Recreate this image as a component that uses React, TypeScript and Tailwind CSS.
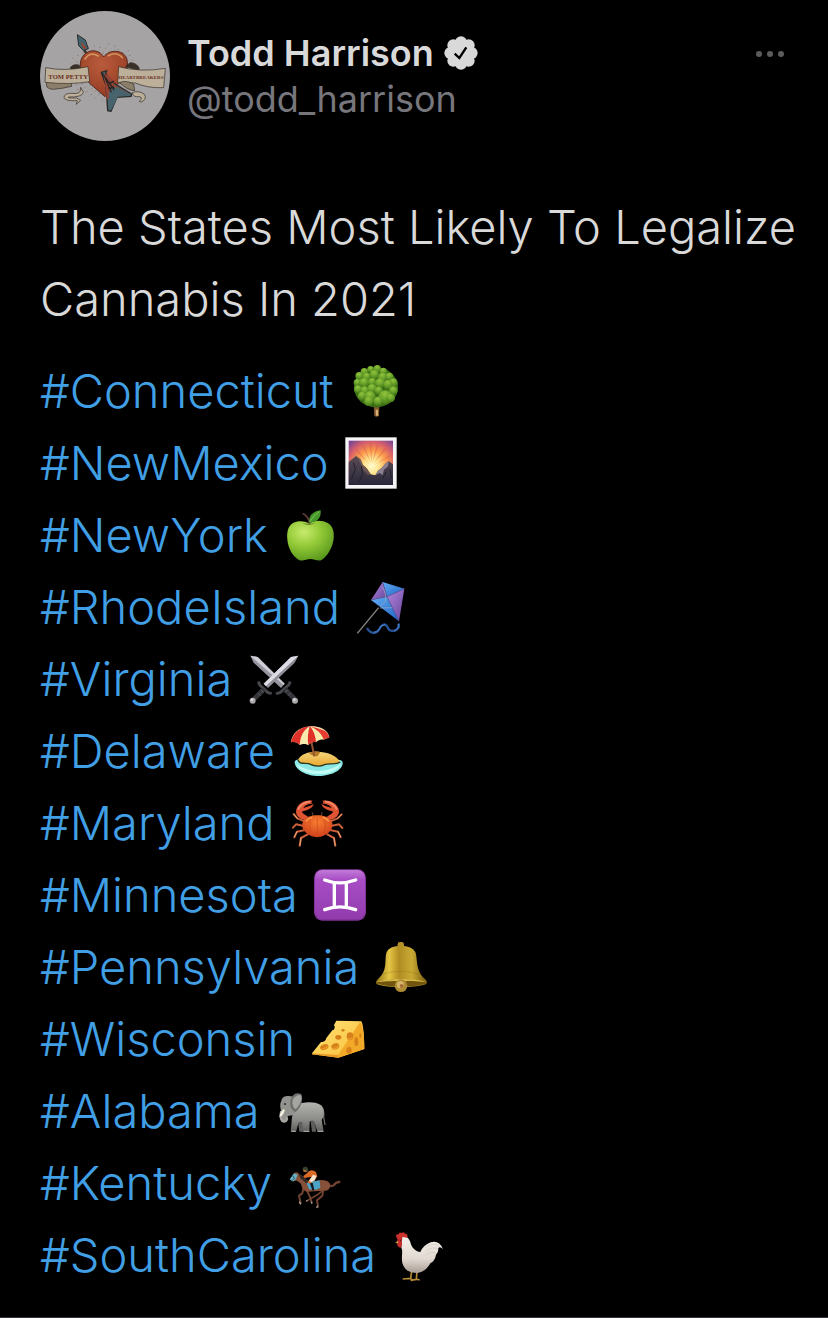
import React from 'react';

interface EmojiProps {
    label: string;
    viewBox: string;
    children: React.ReactNode;
}

const Emoji: React.FC<EmojiProps> = ({ label, viewBox, children }) => (
    <svg role="img" aria-label={label} viewBox={viewBox} className="size-[52px] shrink-0 overflow-visible">
        {children}
    </svg>
);

// [cx, cy, r] of each clump of leaves
const LEAVES = [
    [104, 40, 10], [124, 38, 11], [142, 46, 11], [85, 47, 11], [70, 60, 12], [92, 62, 12], [115, 56, 14],
    [140, 64, 14], [160, 62, 12], [172, 80, 13], [64, 80, 11], [84, 80, 14], [108, 78, 12], [132, 82, 15],
    [156, 86, 14], [66, 100, 12], [86, 104, 13], [108, 98, 14], [128, 104, 12], [172, 104, 13], [78, 120, 13],
    [102, 122, 17], [148, 124, 21], [126, 136, 14], [164, 126, 13], [98, 136, 14],
];

const Tree = () => (
    <Emoji label="Deciduous tree" viewBox="42 27 156 156">
        <defs>
            <radialGradient id="leaf" cx="45%" cy="25%" r="75%">
                <stop offset="0" stopColor="#93c43c" />
                <stop offset="0.55" stopColor="#669f2a" />
                <stop offset="1" stopColor="#427516" />
            </radialGradient>
        </defs>
        <path d="M113 145h17l-1 35q-8 4-14 0z" fill="#85592d" />
        <path d="M119 161h7v18h-6z" fill="#d5b176" />
        <ellipse cx="120" cy="94" rx="66" ry="60" fill="#376e14" />
        {LEAVES.map(([cx, cy, r]) => (
            <circle key={`${cx}-${cy}`} cx={cx} cy={cy} r={r} fill="url(#leaf)" />
        ))}
    </Emoji>
);

const Sunrise = () => (
    <Emoji label="Sunrise over mountains" viewBox="15 243 156 156">
        <defs>
            <radialGradient id="dawn" gradientUnits="userSpaceOnUse" cx="95" cy="330" r="95">
                <stop offset="0" stopColor="#fffbd0" />
                <stop offset="0.25" stopColor="#ffe28a" />
                <stop offset="0.5" stopColor="#fb9a4a" />
                <stop offset="0.75" stopColor="#d8606a" />
                <stop offset="1" stopColor="#7d4796" />
            </radialGradient>
            <linearGradient id="ridge" x1="0" y1="0" x2="0" y2="1">
                <stop offset="0" stopColor="#5b4a55" />
                <stop offset="1" stopColor="#29283a" />
            </linearGradient>
        </defs>
        <rect x="16" y="244" width="154" height="154" fill="#f6f6f8" />
        <rect x="26" y="254" width="133" height="133" fill="url(#dawn)" />
        <path d="M93 322L66 268l6-2zM95 320L88 262h7zM97 320l14-56 6 2zM101 322l34-48 5 4zM88 324l-42-42 4-4zM104 326l46-30 2 5z" fill="#d95c52" opacity="0.45" />
        <path d="M26 318l10-8 12-10 13 9 8 18 11 10 12 18 14 3 8-14 12-9 10-12 10-8 13 10v62H26z" fill="url(#ridge)" />
        <path d="M106 358l8-14 12-9 10-12 10-8-2 16-12 10-4 16-10-6z" fill="#8b7f92" />
        <path d="M48 300l13 9 8 18 11 10 12 18-8 2-14-14-8-20z" fill="#7b5e55" opacity="0.7" />
        <path d="M40 320l6 20-12 30M64 330l4 24-10 22M138 348l-10 20M150 340l4 26" stroke="#1f1f2b" strokeWidth="3" fill="none" />
    </Emoji>
);

const Apple = () => (
    <Emoji label="Green apple" viewBox="33 24 156 156">
        <defs>
            <radialGradient id="apple" cx="36%" cy="28%" r="80%">
                <stop offset="0" stopColor="#c8ea6e" />
                <stop offset="0.45" stopColor="#93ca37" />
                <stop offset="1" stopColor="#55941b" />
            </radialGradient>
        </defs>
        <path d="M108 67c16-9 38-11 56-1 16 9 20 27 18 47-3 27-20 54-36 64-12 5-22-3-34-3s-22 8-34 3C60 168 45 143 43 115c-2-22 2-40 17-49 15-8 34-7 48 1z" fill="url(#apple)" />
        <path d="M88 67q19 10 40-1-18 4-40 1z" fill="#5d8e1e" />
        <path d="M108 68c0-12-6-22-19-30 8 0 20 12 22 29z" fill="#684338" stroke="#684338" strokeWidth="3" />
        <path d="M108 65c-1-22 12-34 35-37 2 23-10 37-35 37z" fill="#45972b" />
        <path d="M111 62q9-18 28-30" stroke="#82c454" strokeWidth="3" fill="none" />
    </Emoji>
);

const Kite = () => (
    <Emoji label="Kite" viewBox="261 240 156 156">
        <defs>
            <linearGradient id="kiteBlue" x1="0" y1="0" x2="1" y2="1">
                <stop offset="0" stopColor="#63aef4" />
                <stop offset="1" stopColor="#1f62c4" />
            </linearGradient>
            <linearGradient id="kitePurple" x1="0" y1="0" x2="1" y2="1">
                <stop offset="0" stopColor="#b184dc" />
                <stop offset="1" stopColor="#67479e" />
            </linearGradient>
        </defs>
        <path d="M341 243l65 20-52 24z" fill="url(#kiteBlue)" />
        <path d="M341 243l13 44-48 10z" fill="url(#kitePurple)" />
        <path d="M406 263l-16 98-36-74z" fill="url(#kitePurple)" />
        <path d="M306 297l48-10 36 74z" fill="url(#kiteBlue)" />
        <path d="M341 243l13 44 36 74M306 297l48-10 52-24" stroke="#5c5b9f" strokeWidth="2" fill="none" />
        <path d="M340 257q14 24 9 45l-16 14M333 321l36-1" stroke="#9faac0" strokeWidth="2" fill="none" />
        <path d="M329 320l-64 77" stroke="#8c8983" strokeWidth="4" />
        <path d="M294 381c10 18 27 19 36 5 6-14 18-22 25-9 4 16 23 15 31 6 5-5 5-10 2-15" stroke="#285296" strokeWidth="7" fill="none" />
        <path d="M314 394q9 0 16-8 7-16 18-15M376 390q14-5 12-22" stroke="#4d8bd0" strokeWidth="3" fill="none" />
    </Emoji>
);

const Swords = () => (
    <Emoji label="Crossed swords" viewBox="36 21 156 156">
        <path d="M43 29l22 4 81 80-11 13-82-76z" fill="#97949f" />
        <path d="M43 29l100 88 3-4-81-80z" fill="#d0cfd8" />
        <path d="M187 29l-22 4-82 80 13 13 80-76z" fill="#908c98" />
        <path d="M187 29L90 120l-7-7 82-80z" fill="#dddce5" />
        <path d="M67 107l4 10 25 23 11 3M163 107l-5 10-26 23-12 3" stroke="#45474c" strokeWidth="9" fill="none" strokeLinejoin="round" />
        <path d="M84 129l-30 30M146 129l30 30" stroke="#34353a" strokeWidth="14" />
        <path d="M75 132l8 8M66 141l8 8M155 132l-8 8M164 141l-8 8" stroke="#6c6d72" strokeWidth="2" />
        <circle cx="50" cy="164" r="9" fill="#aaa6aa" />
        <circle cx="177" cy="164" r="9" fill="#aaa6aa" />
        <circle cx="48" cy="161" r="4" fill="#d8d6d8" />
        <circle cx="175" cy="161" r="4" fill="#d8d6d8" />
    </Emoji>
);

const Beach = () => (
    <Emoji label="Beach with umbrella" viewBox="165 240 156 156">
        <defs>
            <linearGradient id="sand" x1="0" y1="0" x2="0" y2="1">
                <stop offset="0" stopColor="#f5d77c" />
                <stop offset="1" stopColor="#e9a72f" />
            </linearGradient>
        </defs>
        <path d="M176 350c5-9 13-4 23-5h94c15-2 25-1 27 7 2 22-32 40-72 41-37 0-73-19-72-43z" fill="#8ae9e4" />
        <path d="M180 357q66 42 136-1-17 31-68 31-53 0-68-30z" fill="#c2fbf3" />
        <path d="M186 345c8-18 30-25 56-25 32 0 61 12 70 31-16 11-31 2-46 8-19 9-38 2-48-3-16-3-28 2-32-11z" fill="url(#sand)" />
        <path d="M186 345c4 13 16 9 32 11 10 5 29 12 48 3 15-6 31 3 47-8" fill="none" stroke="#28391f" strokeWidth="4" />
        <path d="M218 324q18-8 35-3l-8 12q-14 4-27-9z" fill="#b87b26" />
        <path d="M226 290l9 44" stroke="#955433" strokeWidth="6" />
        <path d="M165 292c2-25 23-45 56-48 29-2 54 9 59 32-4 5-9 3-17 8-6-2-15-1-23 8-8-2-17 0-23 9-7-5-17-6-26-1-6-8-16-11-26-8z" fill="#f8e9ad" />
        <path d="M221 244c-28 3-51 20-56 48 10-3 20 0 26 8 2-24 10-44 30-56z" fill="#df302a" />
        <path d="M221 244c-5 18-7 37-4 57 6-9 15-11 23-9-1-17-7-37-19-48z" fill="#df302a" />
        <path d="M221 244c20 8 36 21 42 40 8-5 13-3 17-8-3-8-7-14-14-19-12-8-28-13-45-13z" fill="#e63a30" />
        <path d="M221 244q28 0 45 13-20-8-45-13z" fill="#faebb9" />
    </Emoji>
);

const Crab = () => (
    <Emoji label="Crab" viewBox="27 21 156 156">
        <defs>
            <radialGradient id="shell" cx="50%" cy="30%" r="70%">
                <stop offset="0" stopColor="#f87d30" />
                <stop offset="1" stopColor="#cf3f1c" />
            </radialGradient>
        </defs>
        <g fill="none" strokeLinecap="round" strokeLinejoin="round">
            <path d="M68 94l-22-9-11-13M66 108l-24-5-9 10M69 120l-24 5-8 17M77 133l-20 11-4 23M145 94l22-9 12-12M147 108l24-5 10 11M144 120l24 5 8 17M136 133l20 11 4 23" stroke="#c9603a" strokeWidth="6" />
            <path d="M36 74l10 11M37 140l8-15M54 166l3-22M178 74l-11 11M176 140l-8-15M159 166l-3-22" stroke="#e7a573" strokeWidth="3" />
        </g>
        <path d="M72 91C53 88 36 76 44 55c6-16 25-26 48-23-5 3-5 6 0 9-12-1-25 5-28 14 8-5 20-6 31-13-5 17-26 19-36 23 5 8 15 11 21 17z" fill="#df5333" />
        <path d="M140 91c19-3 37-15 29-36-6-16-26-26-48-23 4 3 4 6 0 9 11-1 25 5 28 14-8-5-20-6-31-13 5 17 26 19 36 23-5 8-15 11-21 17z" fill="#df5333" />
        <path d="M48 59q10-21 37-25M165 59q-9-21-36-25" stroke="#f38b6c" strokeWidth="5" fill="none" />
        <path d="M91 67l3 19M120 66l-3 20" stroke="#56392d" strokeWidth="4" />
        <path d="M61 100c5-17 24-24 45-24s41 7 45 24c4 17-15 40-45 42-30-2-49-23-45-42z" fill="url(#shell)" />
        <path d="M86 87q-7 24 1 43M127 87q7 24-1 43M106 84v49" stroke="#c44118" strokeWidth="3" fill="none" opacity="0.5" />
        <path d="M71 94q9-10 20-12M122 82q12 3 19 12" stroke="#ffa04e" strokeWidth="4" fill="none" />
    </Emoji>
);

const Gemini = () => (
    <Emoji label="Gemini" viewBox="105 237 156 156">
        <defs>
            <linearGradient id="tile" x1="0" y1="0" x2="0" y2="1">
                <stop offset="0" stopColor="#c27bd8" />
                <stop offset="0.2" stopColor="#a84dc5" />
                <stop offset="1" stopColor="#913bad" />
            </linearGradient>
        </defs>
        <rect x="105" y="238" width="156" height="154" rx="25" fill="#82349b" />
        <rect x="108" y="240" width="150" height="147" rx="23" fill="url(#tile)" />
        <path d="M137 270q45 17 93 0M137 359q45-17 93 0M166 278v73M202 278v73" fill="none" stroke="#fff" strokeWidth="10" strokeLinecap="round" />
    </Emoji>
);

const Bell = () => (
    <Emoji label="Bell" viewBox="216 33 156 156">
        <defs>
            <linearGradient id="brass" x1="0" y1="0" x2="1" y2="0">
                <stop offset="0" stopColor="#8d7014" />
                <stop offset="0.26" stopColor="#e6c744" />
                <stop offset="0.45" stopColor="#b18c22" />
                <stop offset="0.7" stopColor="#c9aa34" />
                <stop offset="1" stopColor="#75590e" />
            </linearGradient>
        </defs>
        <rect x="284" y="36" width="19" height="20" rx="7" fill="#b39028" />
        <path d="M251 66q7-18 43-19 34 1 43 19c8 24-1 55 30 82 5 5 6 11 3 14-22 12-130 12-149 0-4-4-2-10 5-16 30-25 17-58 25-80z" fill="url(#brass)" />
        <path d="M219 157c30-13 123-12 152 0-9 17-142 17-152 0z" fill="#71540e" />
        <path d="M220 157c28-13 121-13 151 0-30-5-120-5-151 0z" fill="#d9bb4a" />
        <path d="M241 132q52-17 109 1" stroke="#8a6b18" strokeWidth="3" fill="none" opacity="0.3" />
        <circle cx="294" cy="167" r="19" fill="#ae8a33" />
        <circle cx="292" cy="164" r="11" fill="#d5b568" />
        <circle cx="296" cy="168" r="6" fill="#a56f35" />
    </Emoji>
);

const Cheese = () => (
    <Emoji label="Cheese wedge" viewBox="36 249 156 156">
        <defs>
            <linearGradient id="rind" x1="0" y1="0" x2="1" y2="1">
                <stop offset="0" stopColor="#ffe27a" />
                <stop offset="1" stopColor="#f9bf35" />
            </linearGradient>
        </defs>
        <path d="M39 370l27-34q13 1 16-12l18-23c7-1 9-9 5-16l7-13 75 2q8 13 9 83l-78 26-79-10z" fill="url(#rind)" />
        <path d="M118 374l65-98q12 8 13 81l-78 26z" fill="#f3a928" />
        <path d="M39 370l79 5v8l-79-10z" fill="#e89b24" />
        <g fill="#d6801b">
            <ellipse cx="76" cy="351" rx="13" ry="8" transform="rotate(-20 76 351)" />
            <ellipse cx="109" cy="349" rx="12" ry="9" transform="rotate(-20 109 349)" />
            <ellipse cx="118" cy="322" rx="9" ry="7" />
            <ellipse cx="132" cy="301" rx="5" ry="4" />
            <ellipse cx="153" cy="319" rx="10" ry="12" />
            <ellipse cx="172" cy="335" rx="6" ry="13" />
            <ellipse cx="150" cy="361" rx="8" ry="10" />
            <ellipse cx="184" cy="317" rx="3" ry="7" />
        </g>
        <path d="M68 355q9 3 18-6M101 355q10 2 17-7M146 326q7 4 15-3" stroke="#ee9b29" strokeWidth="4" fill="none" />
    </Emoji>
);

const Elephant = () => (
    <Emoji label="Elephant" viewBox="30 15 156 156">
        <defs>
            <linearGradient id="hide" x1="0" y1="0" x2="0" y2="1">
                <stop offset="0" stopColor="#b3b3b0" />
                <stop offset="0.6" stopColor="#8b8b88" />
                <stop offset="1" stopColor="#5c5c5a" />
            </linearGradient>
        </defs>
        <path d="M164 76q12 14 9 35l4 24" stroke="#696967" strokeWidth="4" fill="none" />
        <path d="M94 112l6 43h13l-1-42M132 112l6 43h12l-3-42z" fill="#5e5e5c" />
        <path d="M88 75c24-11 59-11 75-1 15 12 12 36 4 45l6 36h-19l-9-31q-6-5-14 1l-1 31h-20l-1-31-11 2-8 29H74l4-44z" fill="url(#hide)" />
        <path d="M46 62c3-15 19-16 37-12l15 29-14 26-19 3c0 16-9 24-18 17-8-8-6-21-1-31-4-12-5-22 0-32z" fill="#92928f" />
        <path d="M46 93c-4 12-3 28 7 31 8 2 12-7 8-12" stroke="#a5a5a2" strokeWidth="7" fill="none" />
        <path d="M76 55c4-13 18-19 29-13 8 8 3 42-17 54-14-5-20-25-12-41z" fill="#6f6f6d" />
        <path d="M82 55q16-15 23-8c4 12-4 30-17 41q-14-13-6-33z" fill="#a5a5a2" />
        <path d="M51 88q-9 11-11 22 9 3 17-20z" fill="#f3f0df" />
        <circle cx="57" cy="72" r="3" fill="#242424" />
        <path d="M77 154h12M113 154h17M155 154h17" stroke="#b5b4ae" strokeWidth="3" />
    </Emoji>
);

const Horse = () => (
    <Emoji label="Horse racing" viewBox="57 231 156 156">
        <g fill="none" stroke="#704330" strokeLinejoin="round" strokeLinecap="round">
            <path d="M104 322l-4 18-10 7 5 23M112 328l12 25 4 14M163 326l-3 21-16 14 3 19" strokeWidth="6" />
            <path d="M158 334l-15 12-30 17" strokeWidth="5" />
            <path d="M178 315q11 6 17 0 6-9 16-9" strokeWidth="7" />
        </g>
        <path d="M67 295l9-17 8-1 17 12 19 16 38-5q25 1 26 17-3 18-22 15l-48 3q-15-5-18-24l-12-9-15 1z" fill="#875039" />
        <path d="M87 279l18 12 17 16-9 4-19-17z" fill="#342722" />
        <path d="M62 298l13-18 11 4-5 13-9 8z" fill="#64afc3" />
        <path d="M71 287l5 8-6 7" stroke="#2e5364" strokeWidth="3" fill="none" />
        <path d="M113 309l39-8 2 22-13 6-21-1z" fill="#4ba4c5" />
        <path d="M122 309l9-1 5 22-5 3z" fill="#171a20" />
        <path d="M112 281q13-17 29-5l4 14-22 21-8-4 13-17-22 4-3-6z" fill="#dc6a27" />
        <path d="M132 284l10 3-4 14-10 6-8-4z" fill="#f4e5d0" />
        <circle cx="109" cy="270" r="7" fill="#a86f42" />
        <path d="M100 268q2-11 13-7 8 6 3 14l-6-5z" fill="#34422b" />
        <path d="M91 365l4 8M127 365l2 6M146 377l-3 7M112 363l3-1" stroke="#a89f98" strokeWidth="4" />
    </Emoji>
);

const Rooster = () => (
    <Emoji label="Rooster" viewBox="48 27 156 156">
        <defs>
            <linearGradient id="plume" x1="0" y1="0" x2="0" y2="1">
                <stop offset="0" stopColor="#f4f0ea" />
                <stop offset="0.6" stopColor="#e2dad2" />
                <stop offset="1" stopColor="#a99d95" />
            </linearGradient>
        </defs>
        <path d="M107 153l-3 22-24 2M123 153l-2 25-17 3M104 176l8 5M121 177l10 3" stroke="#b58c36" strokeWidth="5" fill="none" strokeLinejoin="round" />
        <path d="M78 52q17-7 25 14c3 16 15 29 30 30q8-20 31-29 25-8 37 20-9-8-14-3 1 14-7 20-3 18-17 26-13 25-39 29-37 0-45-30c-4-20 3-34-3-46z" fill="url(#plume)" />
        <path d="M149 82q24-17 40-3M150 94q20-16 35-8M147 107q17-14 31-8" stroke="#cfc6be" strokeWidth="2" fill="none" />
        <path d="M101 114q15 28 51 12" stroke="#cfc6be" strokeWidth="2" fill="none" />
        <path d="M62 55q-5-14 6-12 2-9 9-4 8-6 10 2 10 0 7 12l-14-2-9 8z" fill="#cd322e" />
        <path d="M65 54l14 1-2 15q3 9-4 13-12-2-9-16z" fill="#c92b2b" />
        <path d="M65 62l-7 7 9 1z" fill="#d9a440" />
        <circle cx="73" cy="61" r="2" fill="#222" />
    </Emoji>
);

const STATES = [
    { name: 'Connecticut', icon: Tree },
    { name: 'NewMexico', icon: Sunrise },
    { name: 'NewYork', icon: Apple },
    { name: 'RhodeIsland', icon: Kite },
    { name: 'Virginia', icon: Swords },
    { name: 'Delaware', icon: Beach },
    { name: 'Maryland', icon: Crab },
    { name: 'Minnesota', icon: Gemini },
    { name: 'Pennsylvania', icon: Bell },
    { name: 'Wisconsin', icon: Cheese },
    { name: 'Alabama', icon: Elephant },
    { name: 'Kentucky', icon: Horse },
    { name: 'SouthCarolina', icon: Rooster },
];

// Paint specks scattered around the heart
const SPECKS = Array.from({ length: 150 }, (_, i) => {
    const angle = i * 2.4;
    const reach = 64 + ((i * 37) % 44);
    return { x: Math.round(221 + Math.cos(angle) * reach), y: Math.round(214 + Math.sin(angle) * reach * 0.8), r: 1 + (i % 2) };
});

const Avatar = () => (
    <svg role="img" aria-label="Todd Harrison's avatar" viewBox="30 33 390 390" className="size-[130px] shrink-0">
        <defs>
            <radialGradient id="heart" cx="45%" cy="30%" r="75%">
                <stop offset="0" stopColor="#b95b3c" />
                <stop offset="1" stopColor="#933a22" />
            </radialGradient>
        </defs>
        <circle cx="225" cy="228" r="195" fill="#a5a3a4" />
        {SPECKS.map((s, i) => (
            <circle key={i} cx={s.x} cy={s.y} r={s.r} fill={i % 3 ? '#9a6a45' : '#6d5b50'} opacity="0.6" />
        ))}
        <path d="M151 130l25 42" stroke="#3c2e2a" strokeWidth="7" />
        <path d="M142 104l24 16 9 26-14 6-15-15z" fill="#45636d" stroke="#292d2f" strokeWidth="3" />
        <path d="M152 125l14 14 3 9-10-4z" fill="#99452d" />
        <path d="M221 171c16-23 57-24 69 4 8 30-5 53-26 76l-39 39-47-41c-25-22-34-52-22-76 15-27 51-27 65-2z" fill="url(#heart)" stroke="#57281c" strokeWidth="3" />
        <path d="M165 177q16-23 40-9M235 167q24-14 42 6" stroke="#dda466" strokeWidth="5" fill="none" strokeLinecap="round" opacity="0.8" />
        <g fill="#bcb09a" stroke="#322a24" strokeWidth="2" strokeLinejoin="round">
            <path d="M121 202q10-12 26-7l5 12-28 5zM328 205q-8-17-28-17l-14 12 40 10z" fill="#393028" />
            <path d="M51 246q-8 20 18 22 28-2 56-9l-1-20z" fill="#8b7f69" />
            <path d="M47 203q57 12 127-3l5 45q-60 10-134 2z" />
            <path d="M266 200q66 18 140 5l-5 58q-48 2-85-14l-53-1z" />
            <path d="M268 248q20-9 43 4l3 20q-20-1-46-24z" fill="#8b7f69" />
            <path d="M152 262q4 23-28 18-20-1-22 12 2 12 40 10l-3 11 13-12-12-7q-30 1-25-3 42 1 45-14zM307 278q19-8 36 5 9 14-9 23l-6-1q12-14 0-15-20 2-21-12z" />
        </g>
        <path d="M214 217l16-5-3 10 25 28 53 32-2 7-42 3-18 42-10-2-5-75z" fill="#48636b" stroke="#292a2b" strokeWidth="4" />
        <path d="M220 219l26 15 7 20 49 29-34-7-21-1-17 27-2-29z" fill="#934333" />
        <path d="M262 262l42 22-40 6-20 40-8-50 12-18z" fill="#48636b" />
        <path d="M217 220l36 50M226 235l18 42" stroke="#292524" strokeWidth="4" />
        <path d="M238 250l14-6M236 266l16-5" stroke="#272525" strokeWidth="5" />
        <text x="55" y="236" className="fill-[#69301f] font-['Liberation_Serif',serif] text-[20px] font-bold">
            TOM PETTY
        </text>
        <text x="265" y="238" className="fill-[#69301f] font-['Liberation_Serif',serif] text-[15px] font-bold">
            HEARTBREAKERS
        </text>
    </svg>
);

const VerifiedBadge = () => (
    <svg role="img" aria-label="Verified account" viewBox="0 0 102 102" className="size-[34px] shrink-0">
        <g fill="#d9d9d9">
            <circle cx="51" cy="51" r="36" />
            <circle cx="51" cy="19" r="18" />
            <circle cx="74" cy="28" r="18" />
            <circle cx="83" cy="51" r="18" />
            <circle cx="74" cy="74" r="18" />
            <circle cx="51" cy="83" r="18" />
            <circle cx="28" cy="74" r="18" />
            <circle cx="19" cy="51" r="18" />
            <circle cx="28" cy="28" r="18" />
        </g>
        <path d="M32 53l14 13 21-32" fill="none" stroke="#000" strokeWidth="7" />
    </svg>
);

export default function App() {
    return (
        <main className="min-h-screen border-b border-[#38383c] bg-black pt-[11px] pr-6 pb-6 pl-10 font-['Inter',sans-serif] text-[#d9d9d9]">
            <article>
                {/* Author */}
                <header className="flex items-start">
                    <Avatar />
                    <div className="ml-[17px] flex flex-col pt-[19px] text-4xl leading-[46px]">
                        <div className="flex items-center gap-2.5">
                            <span className="font-semibold">Todd Harrison</span>
                            <VerifiedBadge />
                        </div>
                        <a href="#todd_harrison" className="text-[#76767c]">@todd_harrison</a>
                    </div>
                    <button type="button" aria-label="More" className="mt-[35px] mr-5 ml-auto flex h-4 items-center gap-[5px]">
                        <span className="size-1.5 rounded-full bg-[#5c5c5c]" />
                        <span className="size-1.5 rounded-full bg-[#5c5c5c]" />
                        <span className="size-1.5 rounded-full bg-[#5c5c5c]" />
                    </button>
                </header>

                {/* Tweet text */}
                <div className="mt-[50px] text-[47px] leading-[72px] font-light">
                    <p>The States Most Likely To Legalize Cannabis In 2021</p>
                    <ul className="mt-5">
                        {STATES.map(({ name, icon: Icon }) => (
                            <li key={name} className="flex items-center gap-4">
                                <a href={`#${name}`} className="text-[#419fe5]">#{name}</a>
                                <Icon />
                            </li>
                        ))}
                    </ul>
                </div>
            </article>
        </main>
    );
}
